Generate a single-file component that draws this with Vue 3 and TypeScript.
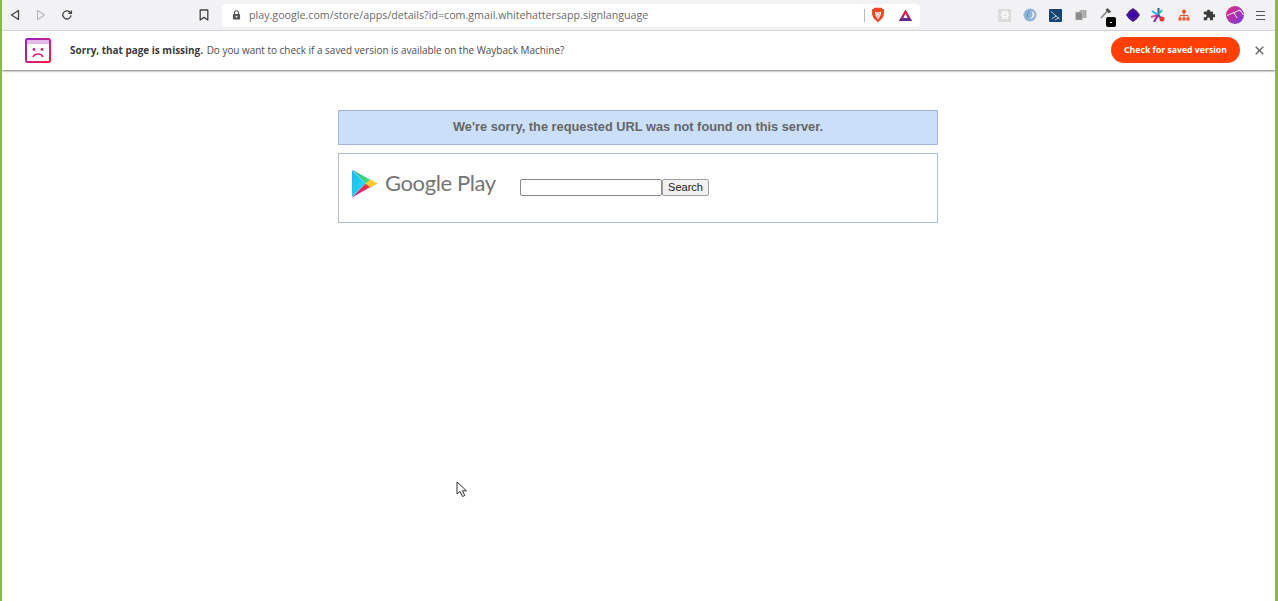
<script setup lang="ts">
const url = 'play.google.com/store/apps/details?id=com.gmail.whitehattersapp.signlanguage'
</script>

<template>
  <div class="page">
    <header class="toolbar">
      <div class="nav">
        <svg class="nav-icon" viewBox="0 0 12 12" width="12" height="12"><path d="M9.500 1.500v9L2.500 6z" fill="none" stroke="#444" stroke-width="1.300" stroke-linejoin="round"/></svg>
        <svg class="nav-icon" viewBox="0 0 12 12" width="12" height="12"><path d="M2.500 1.500v9l7-4.500z" fill="none" stroke="#bbb" stroke-width="1.200" stroke-linejoin="round"/></svg>
        <svg class="nav-icon" viewBox="0 0 12 12" width="12" height="12"><path d="M10 6.200A4.100 4.100 0 1 1 8.800 3L10 4.200M10.400 1.400v3H7.400" fill="none" stroke="#444" stroke-width="1.300"/></svg>
      </div>
      <svg class="bookmark" viewBox="0 0 10 12" width="10" height="12"><path d="M1.200 1h7.600v10L5 8.400 1.200 11z" fill="none" stroke="#444" stroke-width="1.300" stroke-linejoin="round"/></svg>
      <div class="address">
        <svg class="lock" viewBox="0 0 10 11" width="9" height="10"><rect x="1" y="4.400" width="8" height="6" rx="1" fill="#555"/><path d="M2.800 4.500V3a2.200 2.200 0 0 1 4.400 0v1.500" fill="none" stroke="#555" stroke-width="1.200"/><circle cx="5" cy="7.400" r="1" fill="#fff"/></svg>
        <span class="url">{{ url }}</span>
        <span class="sep"></span>
        <svg class="brave" viewBox="0 0 14 16" width="14" height="16"><path d="M3.400.8h7.200l1 1.200 1.600.3-.5 2.600.5 1.200L11.700 11 7 15.200 2.300 11 .8 6.100l.5-1.200-.5-2.600L2.400 2z" fill="#f0451f"/><path d="M3.700 4.800 7 5.600l3.300-.8-1 3.900-1.300 2.200H6L4.700 8.700z" fill="#fff"/><path d="M5 6.800h1.400M7.600 6.800H9M7 8v2.500" stroke="#f0451f" stroke-width=".8" fill="none"/><path d="M5.700 11.200h2.600L7 12.600z" fill="#fff"/></svg>
        <svg class="bat" viewBox="0 0 16 14" width="15" height="13"><path d="M8 .8 15.200 13H.8z" fill="#9e1f63"/><path d="M8 .8 11.500 7H4.500z" fill="#e9203a"/><path d="M.8 13 4 9.600h8l3.200 3.400z" fill="#662d91"/><path d="M5.600 9.600 8 5.200l2.400 4.400z" fill="#fff"/></svg>
      </div>
      <div class="extensions">
        <span class="ext"><span class="ext-square"><svg viewBox="0 0 12 12" width="10" height="10"><g fill="none" stroke="#fff" stroke-width="1"><ellipse cx="6" cy="6" rx="5" ry="2"/><ellipse cx="6" cy="6" rx="5" ry="2" transform="rotate(60 6 6)"/><ellipse cx="6" cy="6" rx="5" ry="2" transform="rotate(120 6 6)"/></g></svg></span></span>
        <span class="ext"><svg viewBox="0 0 14 14" width="14" height="14"><circle cx="7" cy="7" r="6.500" fill="#8fb4d8"/><path d="M8.500 2.500C5 3.500 4 7 5 10.500c-2-3-1-7 3.500-8z" fill="#2f6fb0"/><path d="M8.300 3.500c2 1.500 2 5-1.500 7.500 3-.5 5-3 4.200-5.500-.4-1.200-1.500-2-2.700-2z" fill="#fff"/></svg></span>
        <span class="ext"><svg viewBox="0 0 14 14" width="13" height="13"><rect width="14" height="14" rx="1" fill="#17456f"/><path d="M2 2.500 11.500 11M3 10.500l5-3M6.500 12 11 9" stroke="#dfe8f0" stroke-width=".9" fill="none"/></svg></span>
        <span class="ext"><svg viewBox="0 0 12 12" width="12" height="12"><rect x="4.500" y="1" width="7" height="8" fill="#aaa"/><rect x=".5" y="3" width="7" height="8" fill="#8a8a8a" stroke="#d0d0d0" stroke-width=".6"/></svg></span>
        <span class="ext ext-picker">
          <svg viewBox="0 0 12 12" width="12" height="12"><path d="M1 11 7 4.500" stroke="#8a8a8a" stroke-width="1.800"/><path d="M6.500 2 10 5.500" stroke="#555" stroke-width="3"/></svg>
          <span class="badge"><i></i></span>
        </span>
        <span class="ext"><svg viewBox="0 0 14 14" width="14" height="14"><path d="M0 7l3-4 4-3 4 3 3 4-3 4-4 3-4-3z" fill="#4a148c"/><path d="M7 2.500 11 7l-4 4.500L3 7z" fill="#3a00b0"/></svg></span>
        <span class="ext"><svg viewBox="0 0 14 14" width="14" height="14"><path d="M7.500 0v7" stroke="#3f51b5" stroke-width="2"/><path d="M1 3l6 4" stroke="#29b6f6" stroke-width="2"/><path d="M0 9l7-2" stroke="#ec4899" stroke-width="2"/><path d="M3 14l4-7" stroke="#8e24aa" stroke-width="2"/><path d="M7 7l4-5" stroke="#26c6a6" stroke-width="2"/><path d="M7 7l3 3" stroke="#3f51b5" stroke-width="2"/><circle cx="11" cy="11" r="2.500" fill="#e53935"/></svg></span>
        <span class="ext"><svg viewBox="0 0 14 14" width="14" height="14"><rect width="14" height="14" rx="2" fill="#f6ecea"/><g fill="#e8532f"><circle cx="7" cy="3.500" r="2"/><rect x="1.500" y="9.500" width="3" height="3"/><rect x="5.500" y="9.500" width="3" height="3"/><rect x="9.500" y="9.500" width="3" height="3"/></g><path d="M7 5v4.500M3 9.500V7.500h8v2" fill="none" stroke="#e8532f"/></svg></span>
        <span class="ext"><svg viewBox="0 0 13 13" width="12" height="12"><path d="M5 0.800h2.500v2H10a.8.800 0 0 1 .8.800v2h1.400a1.500 1.500 0 0 1 0 3.400h-1.400v3.200H7.500v-1.400a1.500 1.500 0 0 0-3 0v1.400H.8V9h1.300a1.700 1.700 0 0 0 0-3.400H.8v-2a.8.800 0 0 1 .8-.8H4.500V1.200z" fill="#3c3c3c"/></svg></span>
        <span class="ext"><svg viewBox="0 0 18 18" width="18" height="18"><defs><linearGradient id="avatar-fill" x1="0" y1="0" x2="1" y2="1"><stop offset="0" stop-color="#f0287c"/><stop offset="1" stop-color="#6a3de0"/></linearGradient></defs><circle cx="9" cy="9" r="9" fill="url(#avatar-fill)"/><path d="M1 9.500 14 4 17.500 9M8 6.800 11 12" fill="none" stroke="#fff" stroke-width=".9"/></svg></span>
        <span class="ext"><svg viewBox="0 0 9 11" width="9" height="11"><path d="M0 1.500h9M0 5.500h9M0 9.500h9" stroke="#555" stroke-width="1.200"/></svg></span>
      </div>
    </header>

    <section class="banner">
      <svg class="sad" viewBox="0 0 26 25" width="26" height="25">
        <defs><linearGradient id="sad-fill" x1="0" y1="0" x2="1" y2="1"><stop offset="0" stop-color="#8a24c8"/><stop offset="1" stop-color="#ff1a3c"/></linearGradient></defs>
        <rect x="1" y="1" width="24" height="23" rx="1.500" fill="none" stroke="url(#sad-fill)" stroke-width="2"/>
        <rect x="1" y="1" width="24" height="5" fill="#b02ac0" fill-opacity=".35"/>
        <path d="M1 6h24" stroke="url(#sad-fill)" stroke-width="1.500"/>
        <circle cx="9" cy="11.500" r="1.400" fill="#e01b88"/><circle cx="17" cy="11.500" r="1.400" fill="#e81b68"/>
        <path d="M8 19c1.500-4 8.500-4 10 0" fill="none" stroke="#e81b78" stroke-width="1.700"/>
      </svg>
      <p class="message"><strong>Sorry, that page is missing.</strong> Do you want to check if a saved version is available on the Wayback Machine?</p>
      <button class="save" type="button">Check for saved version</button>
      <svg class="close" viewBox="0 0 9 9" width="9" height="9"><path d="M.7.700l7.600 7.600M8.300.7.700 8.300" stroke="#666" stroke-width="1.400"/></svg>
    </section>

    <main class="content">
      <div class="notice">We're sorry, the requested URL was not found on this server.</div>
      <div class="searchbox">
        <svg class="play" viewBox="0 0 26 29" width="26" height="29">
          <defs>
            <linearGradient id="play-blue" x1="0" y1="0" x2="1" y2="1"><stop offset="0" stop-color="#1fb4ee"/><stop offset="1" stop-color="#1fe6fa"/></linearGradient>
            <linearGradient id="play-green" x1="0" y1="0" x2="1" y2="1"><stop offset="0" stop-color="#2fb488"/><stop offset="1" stop-color="#3fe27a"/></linearGradient>
            <linearGradient id="play-red" x1="1" y1="0" x2="0" y2="1"><stop offset="0" stop-color="#f4364a"/><stop offset="1" stop-color="#d0127a"/></linearGradient>
          </defs>
          <path d="M0 1v27L13.500 14.500z" fill="url(#play-blue)"/>
          <path d="M0 0.500 18.500 11 13.500 14.500z" fill="url(#play-green)"/>
          <path d="M0 28.500 18.500 18 13.500 14.500z" fill="url(#play-red)"/>
          <path d="M18.500 10.500 25 14 Q26 14.500 25 15 L18.500 18.500 13.500 14.500z" fill="#fdc92f"/>
        </svg>
        <span class="wordmark">Google Play</span>
        <form class="search" @submit.prevent>
          <input class="field" type="text" aria-label="Search" />
          <button class="go" type="button">Search</button>
        </form>
      </div>
    </main>

    <svg class="cursor" viewBox="0 0 12 17" width="12" height="17"><path d="M1 1v12l3-2.600L6.500 15.500l2.300-1-2.300-4.700H10.500z" fill="#fff" stroke="#333" stroke-width="1" stroke-linejoin="round"/></svg>
  </div>
</template>

<style scoped>
.page {
  position: relative;
  box-sizing: border-box;
  width: 1278px;
  height: 601px;
  overflow: hidden;
  display: flex;
  flex-direction: column;
  background: #fff;
  border-left: 2px solid #88bc3a;
  border-right: 3px solid #88bc3a;
}
.toolbar {
  flex: none;
  height: 31px;
  box-sizing: border-box;
  display: flex;
  align-items: center;
  background: #f2f2f4;
  border-bottom: 1px solid #dcdce0;
}
.nav {
  display: flex;
  align-items: center;
  margin-left: 7px;
  gap: 14px;
}
.nav-icon { display: block; }
.bookmark { margin-left: 126px; flex: none; }
.address {
  flex: none;
  margin-left: 13px;
  width: 698px;
  height: 23px;
  box-sizing: border-box;
  padding-left: 10px;
  display: flex;
  align-items: center;
  background: #fff;
  border-radius: 4px;
}
.lock { flex: none; }
.url {
  margin-left: 8px;
  font: 10.7px "Open Sans", sans-serif;
  color: #6a6a6a;
  white-space: nowrap;
  flex: 1;
}
.sep {
  width: 1px;
  height: 13px;
  background: #b8b8b8;
  margin-right: 6px;
}
.brave { flex: none; margin-right: 13px; }
.bat { flex: none; margin-right: 7px; }
.extensions {
  flex: none;
  margin-left: 72px;
  display: grid;
  grid-template-columns: repeat(11, 25.55px);
  align-items: center;
  justify-items: center;
}
.ext {
  position: relative;
  display: flex;
  align-items: center;
  justify-content: center;
  height: 20px;
}
.ext-square {
  display: flex;
  align-items: center;
  justify-content: center;
  width: 13px;
  height: 13px;
  background: #dcdcdc;
}
.badge {
  position: absolute;
  left: 4px;
  top: 12px;
  width: 10px;
  height: 10px;
  background: #000;
  border-radius: 2px;
  display: flex;
  align-items: center;
  justify-content: center;
}
.badge i {
  width: 2px;
  height: 1px;
  background: #fff;
}
.ext-picker svg { margin-left: -2px; margin-top: -4px; }
.banner {
  flex: none;
  height: 39px;
  box-sizing: border-box;
  display: flex;
  align-items: center;
  padding: 0 0 1px 23px;
  background: #fff;
  box-shadow: 0 1px 2px rgba(0, 0, 0, 0.55);
  position: relative;
}
.sad { flex: none; }
.message {
  margin: 0 0 0 19px;
  font: 9.95px "Open Sans", sans-serif;
  color: #4c4c4c;
  white-space: nowrap;
  flex: 1;
}
.message strong { color: #3a3a3a; font-weight: 700; margin-right: 1px; }
.save {
  flex: none;
  width: 129px;
  height: 26px;
  padding: 0;
  border: 0;
  border-radius: 13px;
  background: #ff3f06;
  color: #fff;
  font: 700 8.7px "Open Sans", sans-serif;
}
.close { flex: none; margin: 0 11px 0 15px; }
.content {
  flex: 1;
  display: flex;
  flex-direction: column;
  align-items: center;
  padding: 40px 1px 0 0;
  gap: 8px;
}
.notice {
  box-sizing: border-box;
  width: 600px;
  height: 35px;
  display: flex;
  align-items: center;
  justify-content: center;
  padding-bottom: 2px;
  background: #cbe0f8;
  border: 1px solid #a3b5d8;
  font: 700 12.8px "Liberation Sans", Arial, sans-serif;
  color: #666;
}
.searchbox {
  box-sizing: border-box;
  width: 600px;
  height: 70px;
  display: flex;
  align-items: flex-start;
  padding: 15px 0 0 13px;
  background: #fff;
  border: 1px solid #b0bcd6;
}
.play { flex: none; }
.wordmark {
  margin-left: 7px;
  font: 22px/27px Lato, sans-serif;
  color: #757575;
  letter-spacing: -0.4px;
  white-space: nowrap;
  width: 135px;
}
.search {
  display: flex;
  margin-top: 10px;
}
.field {
  box-sizing: border-box;
  width: 142px;
  height: 17px;
  padding: 0;
  background: #fff;
  border: 1px solid #888;
  border-radius: 2px;
}
.go {
  box-sizing: border-box;
  width: 47px;
  height: 17px;
  padding: 0 0 1px;
  background: #f1f1f1;
  border: 1px solid #a0a0a0;
  border-radius: 2px;
  font: 11px "Liberation Sans", Arial, sans-serif;
  color: #222;
}
.cursor {
  position: absolute;
  left: 454px;
  top: 481px;
}
</style>
